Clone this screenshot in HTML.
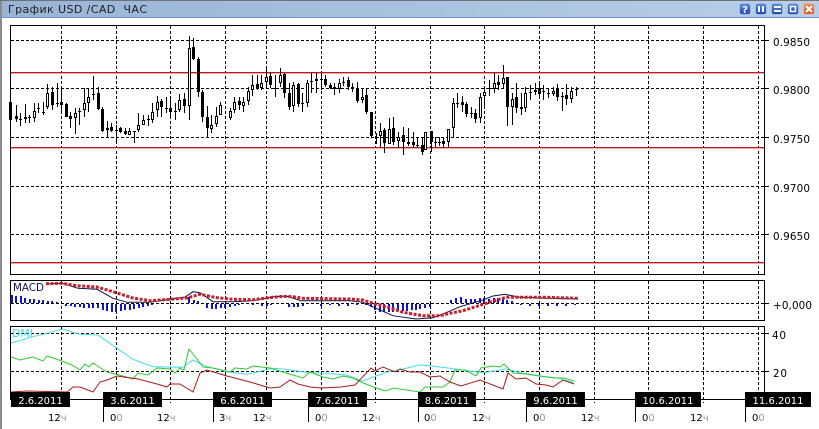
<!DOCTYPE html>
<html><head><meta charset="utf-8"><style>
html,body{margin:0;padding:0;background:#fff;width:819px;height:429px;overflow:hidden}
svg{display:block}
text{font-family:"DejaVu Sans","Liberation Sans",sans-serif}
</style></head><body>
<svg width="819" height="429" viewBox="0 0 819 429" xmlns="http://www.w3.org/2000/svg">
<defs>
<linearGradient id="t" x1="0" x2="1" y1="0" y2="0"><stop offset="0" stop-color="#98b4d6"/><stop offset="1" stop-color="#b8cfe7"/></linearGradient>
<linearGradient id="b" x1="0" x2="0" y1="0" y2="1"><stop offset="0" stop-color="#5f8ae0"/><stop offset="1" stop-color="#1f48ae"/></linearGradient>
<linearGradient id="c" x1="0" x2="0" y1="0" y2="1"><stop offset="0" stop-color="#f08a60"/><stop offset="1" stop-color="#d8502c"/></linearGradient>
<clipPath id="dm"><rect x="10" y="326" width="754" height="73"/></clipPath>
</defs>
<rect width="819" height="429" fill="#fff"/>
<rect x="0" y="0" width="819" height="17" fill="url(#t)"/>
<rect x="0" y="0" width="819" height="1" fill="#6f7378"/>
<rect x="0" y="17" width="819" height="1" fill="#6d90d8"/>
<rect x="0" y="1" width="2" height="428" fill="#8c8c8c"/>
<text x="8" y="13" font-size="11" fill="#222" textLength="139" lengthAdjust="spacing" xml:space="preserve">График USD /CAD  ЧАС</text>
<g>
<rect x="739.5" y="3.5" width="11" height="11" rx="2.5" fill="url(#b)" stroke="#9fb8e0"/><text x="745" y="13" font-size="10" font-weight="bold" fill="#fff" text-anchor="middle">?</text>
<rect x="755.5" y="3.5" width="11" height="11" rx="2.5" fill="url(#b)" stroke="#9fb8e0"/><path d="M759 6v6M763 6v6" stroke="#fff" stroke-width="2"/>
<rect x="771.5" y="3.5" width="11" height="11" rx="2.5" fill="url(#b)" stroke="#9fb8e0"/><path d="M774 7h7M774 11h7" stroke="#fff" stroke-width="2"/>
<rect x="787.5" y="3.5" width="11" height="11" rx="2.5" fill="url(#b)" stroke="#9fb8e0"/><rect x="790.5" y="6.5" width="5" height="5" fill="none" stroke="#fff" stroke-width="1.5"/>
<rect x="803.5" y="3.5" width="11" height="11" rx="2.5" fill="url(#c)" stroke="#e8b8a0"/><path d="M806 6l6 6M812 6l-6 6" stroke="#fff" stroke-width="2"/>
</g>
<g shape-rendering="crispEdges">
<path fill="none" stroke="#000" stroke-dasharray="3 2" d="M11 40.5H764M11 88.5H764M11 137.5H764M11 186.5H764M11 234.5H764M11 303.5H764M11 333.5H764M11 371.5H764"/>
<path fill="none" stroke="#000" stroke-dasharray="3 2" d="M61.5 26V274M116.5 26V274M170.5 26V274M225.5 26V274M266.5 26V274M321.5 26V274M375.5 26V274M430.5 26V274M484.5 26V274M539.5 26V274M594.5 26V274M648.5 26V274M703.5 26V274M758.5 26V274M61.5 281V320M116.5 281V320M170.5 281V320M225.5 281V320M266.5 281V320M321.5 281V320M375.5 281V320M430.5 281V320M484.5 281V320M539.5 281V320M594.5 281V320M648.5 281V320M703.5 281V320M758.5 281V320M61.5 327V399M116.5 327V399M170.5 327V403M225.5 327V399M266.5 327V399M321.5 327V399M375.5 327V403M430.5 327V399M484.5 327V403M539.5 327V399M594.5 327V403M648.5 327V399M703.5 327V403M758.5 327V399"/>
</g>
<rect x="11" y="72" width="753" height="1" fill="#c01820"/><rect x="11" y="73" width="753" height="1" fill="#e8a8a8"/>
<rect x="11" y="147" width="753" height="1" fill="#c01820"/><rect x="11" y="148" width="753" height="1" fill="#e8a8a8"/>
<rect x="11" y="262" width="753" height="1" fill="#c01820"/><rect x="11" y="263" width="753" height="1" fill="#e8a8a8"/>
<g shape-rendering="crispEdges">
<!-- wicks -->
<path fill="none" stroke="#000" d="M10.5 102V121M16.5 105V122M20.5 113V126M25.5 104V123M29.5 115V123M34.5 103V122M38.5 103V113M43.5 102V115M47.5 84V109M52.5 87V110M57.5 83V107M61.5 88V113M66.5 103V117M70.5 112V128M75.5 108V134M79.5 108V125M84.5 88V117M88.5 89V112M93.5 76V100M98.5 87V110M102.5 107V132M107.5 121V138M111.5 123V132M116.5 125V143M120.5 127V133M125.5 128V135M129.5 128V135M134.5 131V143M138.5 113V132M143.5 115V125M148.5 115V126M152.5 103V123M157.5 96V117M161.5 99V117M166.5 97V113M170.5 97V117M175.5 103V120M179.5 94V112M184.5 93V113M189.5 36V120M193.5 38V60M198.5 57V97M202.5 90V122M207.5 106V137M211.5 115V133M216.5 107V127M220.5 102V115M230.5 108V120M234.5 97V113M239.5 97V110M243.5 97V112M248.5 87V105M252.5 75V96M257.5 75V90M261.5 75V90M266.5 68V88M270.5 72V88M275.5 75V97M280.5 68V87M284.5 73V98M289.5 83V110M293.5 82V112M298.5 83V107M302.5 93V112M307.5 80V107M311.5 73V93M316.5 73V93M321.5 73V90M325.5 75V87M330.5 83V89M334.5 83V95M339.5 79V93M343.5 77V86M348.5 77V90M352.5 83V92M357.5 82V103M362.5 88V103M366.5 88V114M371.5 112V137M376.5 133V144M380.5 123V147M384.5 128V153M389.5 118V143M393.5 117V145M398.5 132V148M403.5 127V155M408.5 128V146M413.5 132V147M417.5 138V148M422.5 137V155M425.5 132V150M431.5 132V152M435.5 137V147M439.5 137V146M443.5 137V148M448.5 129V147M453.5 98V137M457.5 93V108M462.5 96V112M466.5 102V117M471.5 107V118M475.5 109V123M480.5 93V123M484.5 88V107M489.5 80V96M494.5 73V93M498.5 75V90M503.5 65V89M507.5 77V126M512.5 93V125M516.5 83V113M521.5 93V115M525.5 87V112M530.5 85V100M535.5 83V95M539.5 83V99M543.5 85V100M548.5 88V98M553.5 87V96M557.5 84V101M562.5 92V111M566.5 84V105M571.5 87V103M576.5 87V96"/>
<!-- dojis -->
<path fill="none" stroke="#000" d="M19 119.5h3M37 108.5h3M42 112.5h3M56 103.5h3M78 111.5h3M92 94.5h3M115 130.5h3M133 131.5h3M147 119.5h3M165 108.5h3M174 111.5h3M274 88.5h3M301 103.5h3M310 81.5h3M320 79.5h3M342 82.5h3M434 142.5h3M438 142.5h3M456 103.5h3M470 113.5h3M488 88.5h3M529 92.5h3M542 91.5h3M547 93.5h3M561 96.5h3M575 89.5h3M416 145.5h3M28 117.5h3"/>
<!-- filled -->
<path fill="none" stroke="#000" stroke-width="3" d="M10.5 102V120M16.5 116V119M25.5 117V119M52.5 92V105M61.5 102V105M66.5 104V117M70.5 116V119M98.5 93V109M102.5 109V131M107.5 128V130M111.5 127V131M120.5 128V132M125.5 131V134M161.5 101V107M170.5 108V112M184.5 99V106M193.5 47V59M198.5 59V92M202.5 92V117M207.5 117V128M239.5 101V105M257.5 84V89M270.5 76V85M284.5 74V93M289.5 93V107M298.5 84V104M316.5 79V81M325.5 79V85M330.5 85V88M334.5 87V89M348.5 80V87M352.5 87V89M357.5 89V101M366.5 95V112M371.5 112V136M384.5 130V143M393.5 128V142M403.5 135V142M408.5 142V144M413.5 142V145M422.5 145V152M431.5 131V142M443.5 141V144M462.5 102V105M466.5 104V114M475.5 113V119M498.5 82V85M507.5 77V107M516.5 97V108M521.5 107V109M535.5 90V92M539.5 88V94M557.5 88V97M566.5 95V99"/>
<!-- hollow -->
<g fill="#fff" stroke="#000">
<rect x="33.5" y="111.5" width="2" height="6"/><rect x="46.5" y="93.5" width="2" height="13"/><rect x="74.5" y="113.5" width="2" height="4"/><rect x="83.5" y="103.5" width="2" height="6"/><rect x="87.5" y="97.5" width="2" height="5"/><rect x="128.5" y="131.5" width="2" height="3"/><rect x="137.5" y="125.5" width="2" height="4"/><rect x="142.5" y="120.5" width="2" height="4"/><rect x="151.5" y="112.5" width="2" height="7"/><rect x="156.5" y="102.5" width="2" height="7"/><rect x="178.5" y="100.5" width="2" height="9"/><rect x="188.5" y="48.5" width="2" height="57"/><rect x="210.5" y="125.5" width="2" height="3"/><rect x="215.5" y="116.5" width="2" height="7"/><rect x="219.5" y="105.5" width="2" height="9"/><rect x="229.5" y="111.5" width="2" height="6"/><rect x="233.5" y="102.5" width="2" height="7"/><rect x="242.5" y="102.5" width="2" height="3"/><rect x="247.5" y="91.5" width="2" height="9"/><rect x="251.5" y="85.5" width="2" height="4"/><rect x="260.5" y="83.5" width="2" height="4"/><rect x="265.5" y="77.5" width="2" height="4"/><rect x="279.5" y="75.5" width="2" height="7"/><rect x="292.5" y="85.5" width="2" height="20"/><rect x="306.5" y="83.5" width="2" height="19"/><rect x="338.5" y="83.5" width="2" height="5"/><rect x="361.5" y="97.5" width="2" height="2"/><rect x="379.5" y="131.5" width="2" height="4"/><rect x="388.5" y="129.5" width="2" height="14"/><rect x="397.5" y="137.5" width="2" height="3"/><rect x="424.5" y="132.5" width="2" height="17"/><rect x="447.5" y="129.5" width="2" height="12"/><rect x="452.5" y="103.5" width="2" height="24"/><rect x="479.5" y="97.5" width="2" height="20"/><rect x="483.5" y="92.5" width="2" height="3"/><rect x="493.5" y="83.5" width="2" height="5"/><rect x="502.5" y="78.5" width="2" height="5"/><rect x="511.5" y="99.5" width="2" height="7"/><rect x="524.5" y="93.5" width="2" height="14"/><rect x="552.5" y="91.5" width="2" height="2"/><rect x="570.5" y="91.5" width="2" height="7"/>
</g>
<!-- histogram -->
<path fill="none" stroke="#1414c8" stroke-width="2" d="M12 295V303M16 296V303M21 296V303M25 298V303M30 299V303M34 299V303M39 300V303M43 300V303M48 301V303M52 301V303M57 302V303M66 304V306M71 304V306M75 304V307M80 304V307M84 304V308M89 304V308M93 304V308M98 304V308M103 304V310M107 304V311M112 304V312M116 304V312M121 304V311M125 304V310M130 304V310M134 304V309M139 304V308M143 304V307M148 304V306M152 304V305M189 297V303M194 300V303M198 301V303M207 304V308M212 304V309M216 304V309M221 304V308M225 304V308M230 304V307M235 304V306M239 304V305M253 304V305M262 304V306M267 304V306M271 304V305M289 304V307M294 304V307M298 304V307M303 304V306M321 304V306M330 304V305M339 304V306M348 304V306M357 304V305M366 304V305M371 304V307M375 304V310M380 304V312M384 304V312M389 304V312M393 304V312M398 304V311M403 304V311M407 304V311M412 304V310M416 304V310M420 304V309M425 304V308M430 304V307M451 300V303M456 298V303M461 297V303M466 299V303M471 299V303M475 299V303M480 298V303M484 298V303M489 299V303M494 298V303M498 298V303M503 298V303M507 300V303M512 301V303M521 304V305M530 304V306M539 304V306M548 304V306M557 304V306M566 304V306M575 304V305"/>
<path fill="none" stroke="#000" d="M10.5 25.5H764.5V274.5H10.5ZM10.5 280.5H764.5V320.5H10.5ZM10.5 326.5H764.5V399.5H10.5Z"/>
<path fill="none" stroke="#000" d="M765 40.5h4M765 88.5h4M765 137.5h4M765 186.5h4M765 234.5h4M765 303.5h4M765 333.5h4M765 371.5h4"/>
</g>
<!-- MACD lines -->
<polyline fill="none" stroke="#101050" stroke-width="1" points="47,284 62,283.3 78,288.3 97,289.3 113,298.3 127,302.3 150,302.3 170,299.3 185,297 193,291.7 200,292.7 213,301.7 233,301.7 253,300.7 273,296.7 286,296 301,300.7 350,300.7 363,302.3 376,308.3 393,315.7 416,319 433,317.7 446,312.7 460,306.7 483,300 493,296 505,294.3 520,297.3 546,298.3 578,299"/>
<polyline fill="none" stroke="#c81e28" stroke-width="3" stroke-dasharray="3 1.55" points="46,283.7 62,283.3 77,285.7 97,287 113,291.7 133,298 150,300.7 170,299.3 187,298 200,294.3 217,297.7 233,299.3 253,299.7 273,297.3 283,296.3 293,296.7 303,298.3 350,299 363,300 373,303.3 386,306.7 403,312.3 423,315.7 440,315.7 450,313.3 463,310.7 483,304.3 506,297.3 546,297.3 578,298.3"/>
<!-- DMI -->
<g clip-path="url(#dm)" fill="none" stroke-width="1">
<polyline stroke="#3fdce6" points="11,343 33,336.7 47,333.3 63,329 80,334.3 98,335 117,348.3 133,359.3 153,366.7 183,367.3 193,360 207,366.7 227,371.7 247,374.3 273,368.3 283,369 306,372.3 326,373.3 346,375 363,381 386,372.3 403,369 421,364.7 446,367.7 483,372.7 506,369 523,373.3 546,376.7 559,378.3 574,382.7"/>
<polyline stroke="#32c832" points="11,357 20,360 33,357 43,361 47,356 62,361 72,365 80,370 85,364 89,367 93,363 107,372 123,376 133,379 138,373 148,375 157,368 170,369 175,373 180,368 184,370 189,349 197,359 203,367 213,368 230,372 235,368 247,369 253,366 270,368 283,372 293,375 303,378 310,372 323,377 333,379 343,376 353,378 361,382 376,388 386,391 393,388 420,392 425,387 443,387 450,382 455,370 465,370 476,376 481,368 493,366 500,367 504,364 513,373 526,374 546,377 556,378 564,378 574,381"/>
<polyline stroke="#a81c1c" points="11,392 27,391 67,392 73,387 80,387 93,392 100,382 107,380 117,376 138,379 157,384 167,387 170,384 180,384 193,392 200,373 207,370 227,376 250,382 270,388 280,387 290,380 298,384 310,387 321,388 341,387 355,385 371,368 375,371 383,367 395,372 400,369 410,372 420,372 430,377 440,376 450,382 461,386 480,380 503,389 508,373 516,379 526,378 536,384 546,385 553,387 563,380 574,384"/>
</g>
<text x="13" y="291" font-size="11" fill="#101050" textLength="31" lengthAdjust="spacingAndGlyphs">MACD</text>
<text x="12" y="337" font-size="11" fill="#3fdce6" textLength="21" lengthAdjust="spacingAndGlyphs">DMI</text>
<g font-size="10.4" fill="#000">
<text x="773" y="46" textLength="37" lengthAdjust="spacing">0.9850</text>
<text x="773" y="94" textLength="37" lengthAdjust="spacing">0.9800</text>
<text x="773" y="143" textLength="37" lengthAdjust="spacing">0.9750</text>
<text x="773" y="192" textLength="37" lengthAdjust="spacing">0.9700</text>
<text x="773" y="240" textLength="37" lengthAdjust="spacing">0.9650</text>
<text x="773" y="309" textLength="39" lengthAdjust="spacing">+0,000</text>
<text x="772" y="339" textLength="14" lengthAdjust="spacing">40</text>
<text x="773" y="377" textLength="14" lengthAdjust="spacing">20</text>
</g>
<g fill="#000" shape-rendering="crispEdges">
<rect x="11" y="392" width="59" height="15"/><rect x="103" y="392" width="59" height="15"/><rect x="213" y="392" width="59" height="15"/><rect x="308" y="392" width="59" height="15"/><rect x="418" y="392" width="58" height="15"/><rect x="526" y="392" width="59" height="15"/><rect x="635" y="392" width="66" height="15"/><rect x="745" y="392" width="66" height="15"/>
<rect x="103" y="407" width="1" height="15"/><rect x="213" y="407" width="1" height="15"/><rect x="308" y="407" width="1" height="15"/><rect x="418" y="407" width="1" height="15"/><rect x="526" y="407" width="1" height="15"/><rect x="635" y="407" width="1" height="15"/><rect x="745" y="407" width="1" height="15"/>
</g>
<g font-size="10" fill="#fff" text-anchor="middle">
<text x="40.5" y="404">2.6.2011</text><text x="132.5" y="404">3.6.2011</text><text x="242.5" y="404">6.6.2011</text><text x="337.5" y="404">7.6.2011</text><text x="447" y="404">8.6.2011</text><text x="555.5" y="404">9.6.2011</text><text x="668" y="404">10.6.2011</text><text x="778" y="404">11.6.2011</text>
</g>
<g font-size="10" fill="#000">
<text x="48" y="421">12<tspan fill="#999">ч</tspan></text>
<text x="110" y="421">0<tspan fill="#999">0</tspan></text>
<text x="157" y="421">12<tspan fill="#999">ч</tspan></text>
<text x="219" y="421">3<tspan fill="#999">ч</tspan></text>
<text x="253" y="421">12<tspan fill="#999">ч</tspan></text>
<text x="315" y="421">0<tspan fill="#999">0</tspan></text>
<text x="362" y="421">12<tspan fill="#999">ч</tspan></text>
<text x="424" y="421">0<tspan fill="#999">0</tspan></text>
<text x="472" y="421">12<tspan fill="#999">ч</tspan></text>
<text x="533" y="421">0<tspan fill="#999">0</tspan></text>
<text x="581" y="421">12<tspan fill="#999">ч</tspan></text>
<text x="642" y="421">0<tspan fill="#999">0</tspan></text>
<text x="690" y="421">12<tspan fill="#999">ч</tspan></text>
<text x="752" y="421">0<tspan fill="#999">0</tspan></text>
</g>
</svg>
</body></html>
